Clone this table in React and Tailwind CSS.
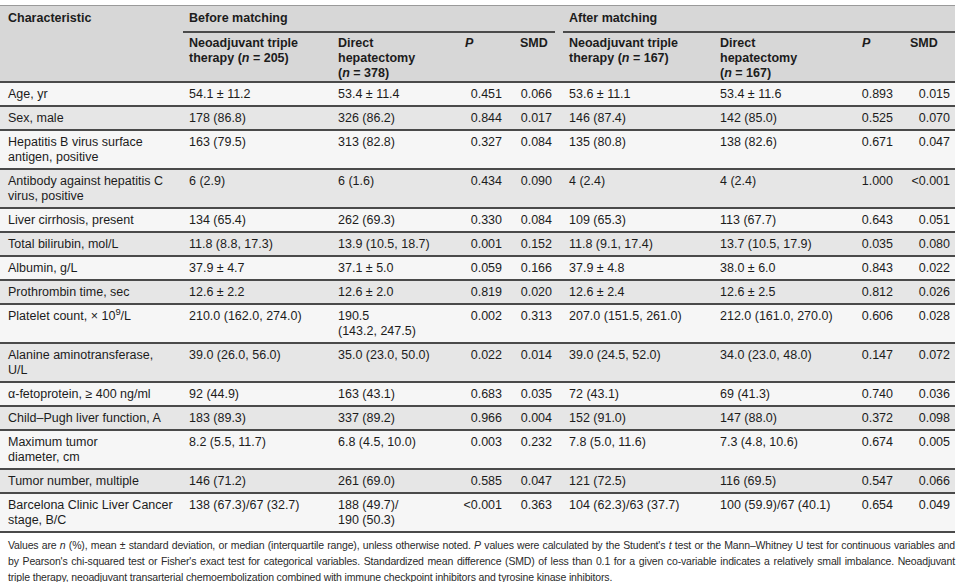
import React from "react";

const GRID =
  "grid grid-cols-[181px_149px_127px_55px_49px_151px_142px_48px_53px]";

const rows = [
  [["Age, yr"], "54.1 ± 11.2", "53.4 ± 11.4", "0.451", "0.066", "53.6 ± 11.1", "53.4 ± 11.6", "0.893", "0.015"],
  [["Sex, male"], "178 (86.8)", "326 (86.2)", "0.844", "0.017", "146 (87.4)", "142 (85.0)", "0.525", "0.070"],
  [["Hepatitis B virus surface", "antigen, positive"], "163 (79.5)", "313 (82.8)", "0.327", "0.084", "135 (80.8)", "138 (82.6)", "0.671", "0.047"],
  [["Antibody against hepatitis C", "virus, positive"], "6 (2.9)", "6 (1.6)", "0.434", "0.090", "4 (2.4)", "4 (2.4)", "1.000", "<0.001"],
  [["Liver cirrhosis, present"], "134 (65.4)", "262 (69.3)", "0.330", "0.084", "109 (65.3)", "113 (67.7)", "0.643", "0.051"],
  [["Total bilirubin, mol/L"], "11.8 (8.8, 17.3)", "13.9 (10.5, 18.7)", "0.001", "0.152", "11.8 (9.1, 17.4)", "13.7 (10.5, 17.9)", "0.035", "0.080"],
  [["Albumin, g/L"], "37.9 ± 4.7", "37.1 ± 5.0", "0.059", "0.166", "37.9 ± 4.8", "38.0 ± 6.0", "0.843", "0.022"],
  [["Prothrombin time, sec"], "12.6 ± 2.2", "12.6 ± 2.0", "0.819", "0.020", "12.6 ± 2.4", "12.6 ± 2.5", "0.812", "0.026"],
  ["PLATELET", "210.0 (162.0, 274.0)", ["190.5", "(143.2, 247.5)"], "0.002", "0.313", "207.0 (151.5, 261.0)", "212.0 (161.0, 270.0)", "0.606", "0.028"],
  [["Alanine aminotransferase,", "U/L"], "39.0 (26.0, 56.0)", "35.0 (23.0, 50.0)", "0.022", "0.014", "39.0 (24.5, 52.0)", "34.0 (23.0, 48.0)", "0.147", "0.072"],
  [["α-fetoprotein, ≥ 400 ng/ml"], "92 (44.9)", "163 (43.1)", "0.683", "0.035", "72 (43.1)", "69 (41.3)", "0.740", "0.036"],
  [["Child–Pugh liver function, A"], "183 (89.3)", "337 (89.2)", "0.966", "0.004", "152 (91.0)", "147 (88.0)", "0.372", "0.098"],
  [["Maximum tumor", "diameter, cm"], "8.2 (5.5, 11.7)", "6.8 (4.5, 10.0)", "0.003", "0.232", "7.8 (5.0, 11.6)", "7.3 (4.8, 10.6)", "0.674", "0.005"],
  [["Tumor number, multiple"], "146 (71.2)", "261 (69.0)", "0.585", "0.047", "121 (72.5)", "116 (69.5)", "0.547", "0.066"],
  [["Barcelona Clinic Liver Cancer", "stage, B/C"], "138 (67.3)/67 (32.7)", ["188 (49.7)/", "190 (50.3)"], "<0.001", "0.363", "104 (62.3)/63 (37.7)", "100 (59.9)/67 (40.1)", "0.654", "0.049"],
];

function Lines({ v }) {
  if (v === "PLATELET") {
    return (
      <>
        Platelet count, × 10<sup>9</sup>/L
      </>
    );
  }
  const arr = Array.isArray(v) ? v : [v];
  return arr.map((t, i) => (
    <React.Fragment key={i}>
      {i > 0 && <br />}
      {t}
    </React.Fragment>
  ));
}

const cellBase = "pt-[4px] pb-[3px] whitespace-nowrap";
const cellCls = [
  `${cellBase} pl-2`,
  `${cellBase} pl-2`,
  `${cellBase} pl-2`,
  `${cellBase} pr-[10px] text-right`,
  `${cellBase} pr-[9px] text-right`,
  `${cellBase} pl-2`,
  `${cellBase} pl-2`,
  `${cellBase} pr-[9px] text-right`,
  `${cellBase} pr-[5px] text-right`,
];

function N({ n }) {
  return (
    <span className="whitespace-nowrap">
      (<i>n</i> = {n})
    </span>
  );
}

export default function App() {
  return (
    <div className="w-[960px] h-[582px] bg-white pt-[5px] text-[#1c1c1c] text-[12.5px] leading-[15px] font-['Liberation_Sans',Arial,sans-serif] overflow-hidden">
      <div className="w-[955px]">
        {/* Header */}
        <div
          className={`${GRID} bg-[#d7d7d7] border-t border-t-[#9a9a9a] border-b-2 border-b-[#4a4a4a] font-bold`}
        >
          <div className="row-span-2 pl-2 pt-[5px]">Characteristic</div>
          <div className="col-span-4 ml-[2px] mr-[6px] pl-[6px] pt-[5px] pb-[5px] border-b-2 border-b-[#4a4a4a]">
            Before matching
          </div>
          <div className="col-span-4 ml-[2px] pl-[6px] pt-[5px] pb-[5px] border-b-2 border-b-[#4a4a4a]">
            After matching
          </div>
          <div className="pl-2 pt-[3px] whitespace-nowrap">
            Neoadjuvant triple
            <br />
            therapy <N n="205" />
          </div>
          <div className="pl-2 pt-[3px] whitespace-nowrap">
            Direct
            <br />
            hepatectomy
            <br />
            <N n="378" />
          </div>
          <div className="pl-2 pt-[3px]">
            <i>P</i>
          </div>
          <div className="pl-2 pt-[3px]">SMD</div>
          <div className="pl-2 pt-[3px] whitespace-nowrap">
            Neoadjuvant triple
            <br />
            therapy <N n="167" />
          </div>
          <div className="pl-2 pt-[3px] whitespace-nowrap">
            Direct
            <br />
            hepatectomy
            <br />
            <N n="167" />
          </div>
          <div className="pl-2 pt-[3px]">
            <i>P</i>
          </div>
          <div className="pl-2 pt-[3px]">SMD</div>
        </div>

        {/* Body */}
        {rows.map((r, i) => (
          <div
            key={i}
            className={`${GRID} border-b-2 border-b-[#4a4a4a] ${
              i % 2 === 0 ? "bg-[#f6f6f6]" : "bg-[#e6e6e6]"
            }`}
          >
            {r.map((c, j) => (
              <div key={j} className={cellCls[j]}>
                <Lines v={c} />
              </div>
            ))}
          </div>
        ))}
      </div>

      {/* Footnote */}
      <div className="w-[955px] mt-[4px] pl-2 text-[10.5px] leading-[16px] text-[#2a2a2a] tracking-[-0.15px]">
        <div className="text-justify [text-align-last:justify]">
          Values are <i>n</i> (%), mean ± standard deviation, or median (interquartile range), unless otherwise noted. <i>P</i> values were calculated by the Student's <i>t</i> test or the Mann–Whitney U test for continuous variables and
        </div>
        <div className="text-justify [text-align-last:justify]">
          by Pearson's chi-squared test or Fisher's exact test for categorical variables. Standardized mean difference (SMD) of less than 0.1 for a given co-variable indicates a relatively small imbalance. Neoadjuvant
        </div>
        <div>
          triple therapy, neoadjuvant transarterial chemoembolization combined with immune checkpoint inhibitors and tyrosine kinase inhibitors.
        </div>
      </div>
    </div>
  );
}
